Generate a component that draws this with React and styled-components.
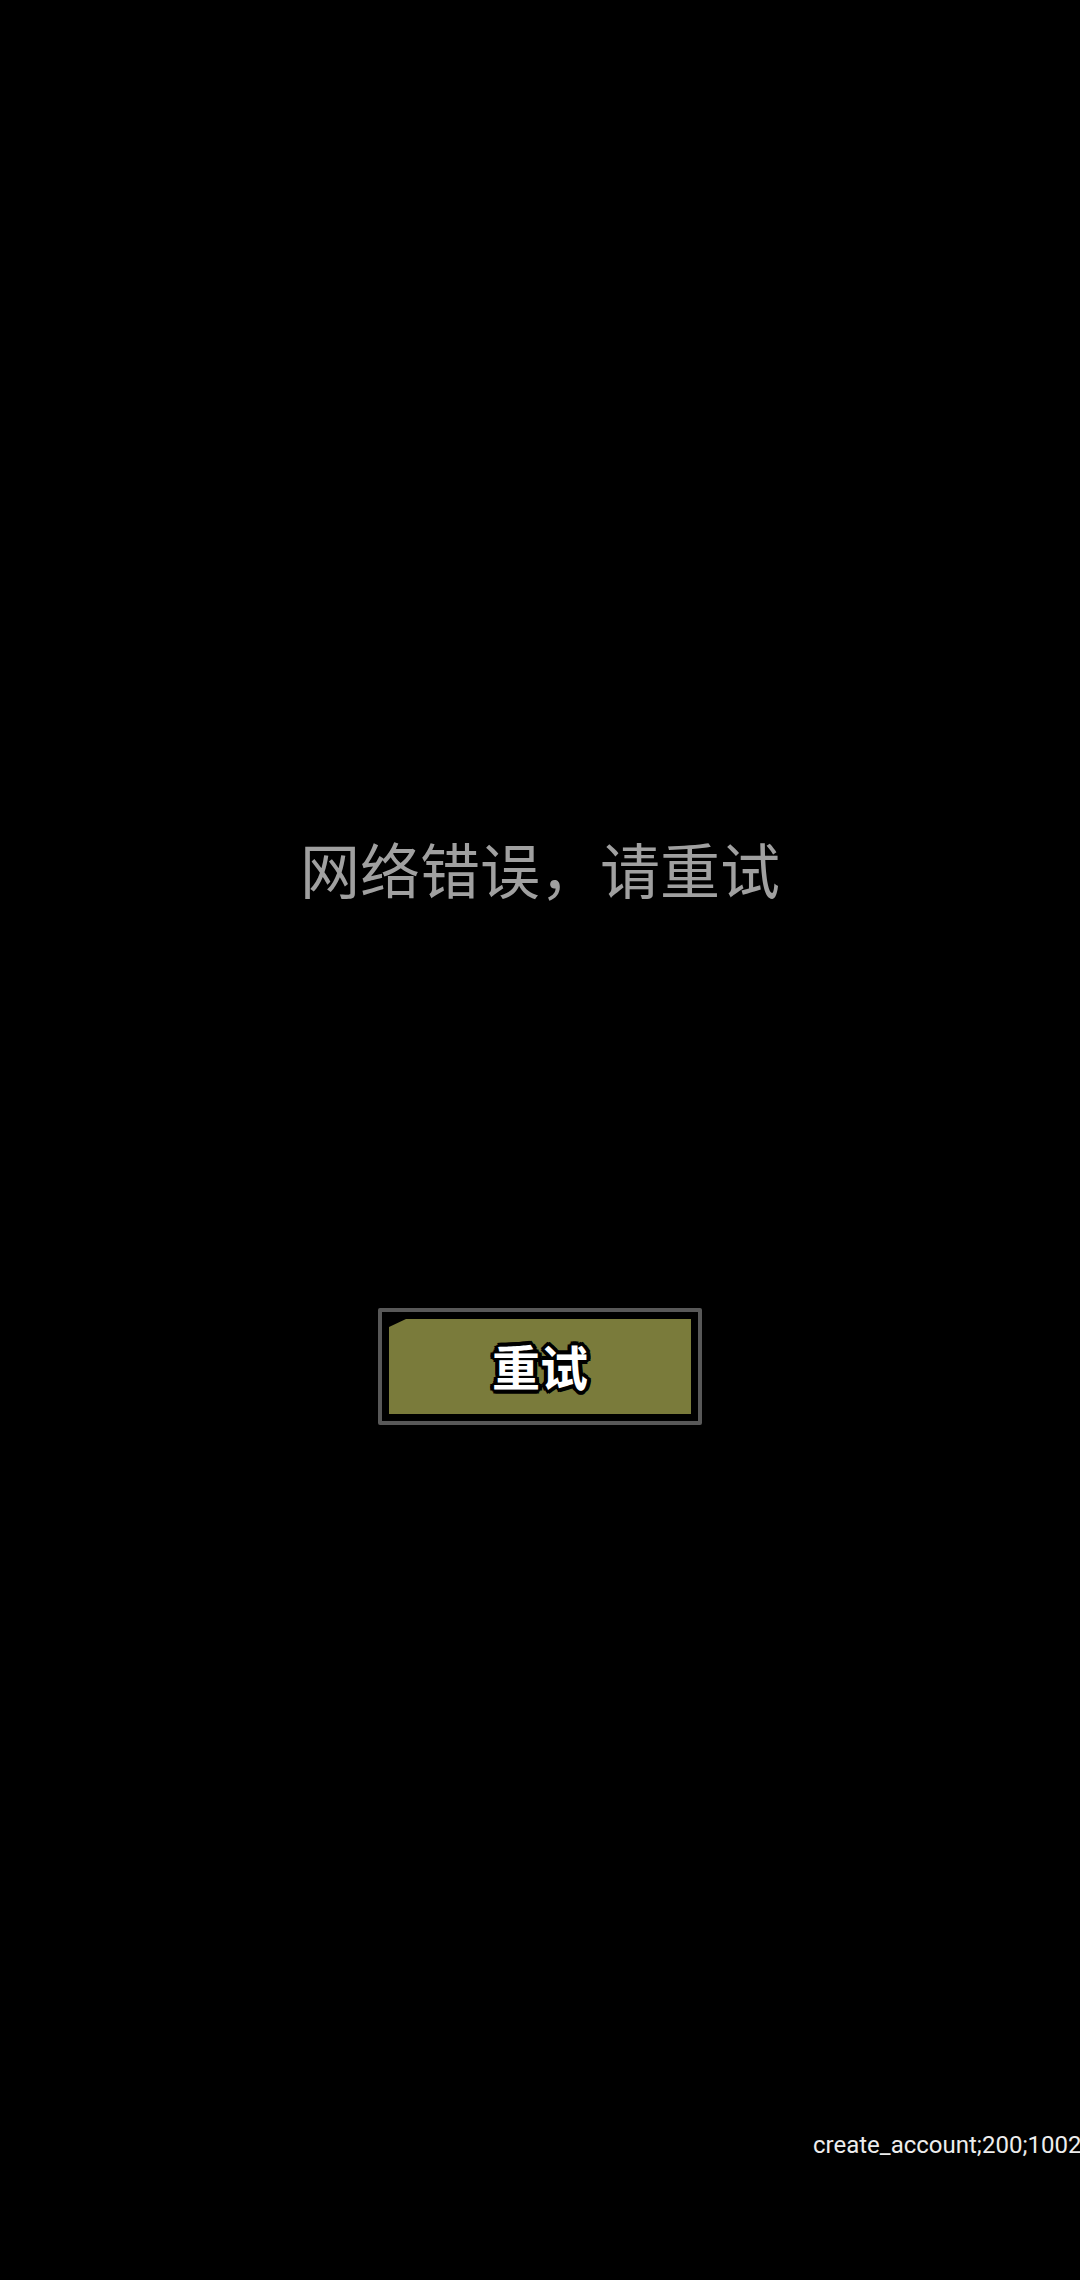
import React from 'react';
import styled, { createGlobalStyle } from 'styled-components';

const GlobalStyle = createGlobalStyle`
	html, body {
		margin: 0;
		padding: 0;
		background: #000;
	}
	body {
		font-family: 'Noto Sans CJK SC', 'Noto Sans', sans-serif;
	}
`;

const Screen = styled.div`
	position: relative;
	width: 1080px;
	height: 2280px;
	background: #000;
	display: flex;
	flex-direction: column;
	align-items: center;
	overflow: hidden;
`;

const Message = styled.div`
	margin-top: 826px;
	font-size: 60px;
	font-weight: 400;
	line-height: 84px;
	color: #a0a0a0;
`;

const RetryFrame = styled.button`
	margin-top: 398px;
	width: 324px;
	height: 117px;
	padding: 7px;
	border: 4px solid #585858;
	border-radius: 2px;
	background: #000;
	cursor: pointer;
	display: flex;
`;

const RetryFace = styled.div`
	flex: 1;
	display: flex;
	align-items: center;
	justify-content: center;
	padding-bottom: 4px;
	background: #7a7b3b;
	clip-path: polygon(17px 0, 100% 0, 100% 100%, 0 100%, 0 8px);
	font-family: 'Noto Sans CJK SC', sans-serif;
	font-weight: 700;
	font-size: 48px;
	line-height: 1;
	color: #fff;
	text-shadow:
		3px 0 0 #000, -3px 0 0 #000, 0 3px 0 #000, 0 -3px 0 #000,
		2px 2px 0 #000, -2px 2px 0 #000, 2px -2px 0 #000, -2px -2px 0 #000,
		4px 1px 0 #000, -4px 1px 0 #000, 1px 4px 0 #000, 1px -4px 0 #000,
		4px -1px 0 #000, -4px -1px 0 #000, -1px 4px 0 #000, -1px -4px 0 #000;
`;

const Footer = styled.div`
	margin-top: auto;
	margin-bottom: 120px;
	align-self: stretch;
	padding-left: 813px;
	font-family: Roboto, 'Noto Sans', sans-serif;
	font-size: 24px;
	line-height: 30px;
	color: #ededed;
	white-space: nowrap;
	overflow: hidden;
`;

const App = () => {
	return (
		<>
			<GlobalStyle />
			<Screen>
				<Message>网络错误，请重试</Message>
				<RetryFrame type="button">
					<RetryFace>重试</RetryFace>
				</RetryFrame>
				<Footer>create_account;200;1002</Footer>
			</Screen>
		</>
	);
};

export default App;
